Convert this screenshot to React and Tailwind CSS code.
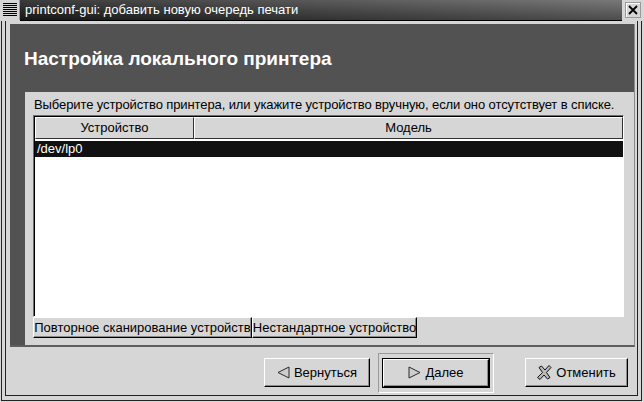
import React from "react";

function TriLeft() {
  return (
    <svg width="13" height="13" viewBox="0 0 13 13">
      <polygon points="12,1 12,12 1,6.5" fill="#cdcdcd" stroke="#2a2a2a" strokeWidth="1" />
    </svg>
  );
}

function TriRight() {
  return (
    <svg width="13" height="13" viewBox="0 0 13 13">
      <polygon points="1,1 1,12 12,6.5" fill="#cdcdcd" stroke="#2a2a2a" strokeWidth="1" />
    </svg>
  );
}

function CancelIcon() {
  return (
    <svg width="15" height="15" viewBox="0 0 15 15">
      <polygon
        points="2,2.5 4.5,1 8,5 12,0.5 14,2.5 9.5,7.5 13,12.5 10.5,14 7,10 3,14.5 0.5,12.5 5.5,7.5"
        fill="#b8b8b8"
        stroke="#111"
        strokeWidth="1"
        strokeLinejoin="round"
      />
    </svg>
  );
}

const btn =
  "bg-[#d6d6d6] border-t border-l border-white border-r border-b border-r-black border-b-black shadow-[inset_-1px_-1px_0_#8c8c8c]";

export default function App() {
  return (
    <div className="w-[644px] h-[402px] flex flex-col bg-[#d6d6d6] overflow-hidden font-['Liberation_Sans',Arial,sans-serif] text-black select-none">
      {/* title bar */}
      <div className="h-[21px] flex shrink-0">
        <div className="w-[20px] h-[20px] flex flex-col gap-[1px] pt-[3px] pl-[3px] border-r border-[#9a9a9a]">
          {[0, 1, 2, 3, 4, 5, 6].map(i => (
            <div key={i} className="w-[14px] h-[1px] bg-black" />
          ))}
        </div>
        <div className="flex-1 h-[21px] border-b border-black bg-[linear-gradient(to_bottom,rgba(255,255,255,0.14),rgba(0,0,0,0.22)),linear-gradient(to_right,#1c1c1c,#626262)] text-white text-[13px] leading-[20px] pl-[5px] whitespace-nowrap">
          printconf-gui: добавить новую очередь печати
        </div>
        <div className="w-[22px] h-[21px] flex justify-center pt-[2px]">
          <div className="w-[16px] h-[16px] border border-[#9a9a9a] bg-[#d6d6d6] flex items-center justify-center shadow-[inset_1px_1px_0_#fff]">
            <svg width="10" height="10" viewBox="0 0 10 10">
              <path d="M1 1 L9 9 M9 1 L1 9" stroke="#000" strokeWidth="1.8" />
            </svg>
          </div>
        </div>
      </div>

      {/* window frame */}
      <div className="flex-1 flex ml-[1px] mr-[2px] mb-[1px] border-x border-b border-[#222] px-[3px] pb-[4px]">
        <div className="flex-1 flex flex-col border-x border-b border-[#222]">
          {/* druid page */}
          <div className="mt-[3px] ml-[4px] mr-[2px] h-[323px] flex flex-col bg-[#525252] border-b-2 border-b-[#5e5e5e] border-r border-r-[#8c8c8c]">
            <div className="h-[68px] shrink-0 flex items-center pl-[14px]">
              <span className="text-white font-bold text-[19px] leading-none">Настройка локального принтера</span>
            </div>
            <div className="flex-1 ml-[15px] bg-[#d6d6d6] flex flex-col pl-[8px] pr-[10px] pt-[3px] pb-[7px]">
              <div className="h-[20px] leading-[20px] text-[13px] tracking-[-0.1px] pl-[1px] whitespace-nowrap">
                Выберите устройство принтера, или укажите устройство вручную, если оно отсутствует в списке.
              </div>
              {/* table */}
              <div className="h-[202px] flex flex-col border-t border-l border-[#6e6e6e] border-r border-b border-r-white border-b-white">
                <div className="flex-1 flex flex-col border-t border-l border-black bg-white">
                  <div className="h-[22px] flex shrink-0 text-[13px]">
                    <div className="w-[159px] border-t border-l border-white border-r border-b border-r-[#333] border-b-[#333] bg-[#d6d6d6] flex items-center justify-center">
                      Устройство
                    </div>
                    <div className="flex-1 border-t border-l border-white border-r border-b border-r-[#333] border-b-[#333] bg-[#d6d6d6] flex items-center justify-center">
                      Модель
                    </div>
                  </div>
                  <div className="pt-[2px]">
                    <div className="h-[16px] bg-[#111] text-white text-[13px] leading-[16px] pl-[2px]">/dev/lp0</div>
                  </div>
                </div>
              </div>
              <div className="h-[21px] flex text-[13px]">
                <div className={`w-[219px] ${btn} flex items-center justify-center whitespace-nowrap overflow-hidden`}>
                  Повторное сканирование устройств
                </div>
                <div className={`w-[165px] ${btn} flex items-center justify-center whitespace-nowrap overflow-hidden`}>
                  Нестандартное устройство
                </div>
              </div>
            </div>
          </div>

          {/* bottom buttons */}
          <div className="flex-1 flex items-center justify-end pr-[9px] pt-[3px] text-[13px]">
            <div className={`w-[106px] h-[29px] ${btn} flex items-center justify-center gap-[4px]`}>
              <TriLeft />
              <span>Вернуться</span>
            </div>
            <div className="ml-[8px] w-[116px] h-[40px] border-t border-l border-[#9a9a9a] border-r border-b border-r-white border-b-white flex items-center justify-center">
              <div className="w-[108px] h-[30px] border border-black flex">
                <div className={`flex-1 ${btn} flex items-center justify-center gap-[4px]`}>
                  <TriRight />
                  <span>Далее</span>
                </div>
              </div>
            </div>
            <div className={`ml-[31px] w-[103px] h-[29px] ${btn} flex items-center justify-center gap-[4px]`}>
              <CancelIcon />
              <span>Отменить</span>
            </div>
          </div>
        </div>
      </div>
    </div>
  );
}
